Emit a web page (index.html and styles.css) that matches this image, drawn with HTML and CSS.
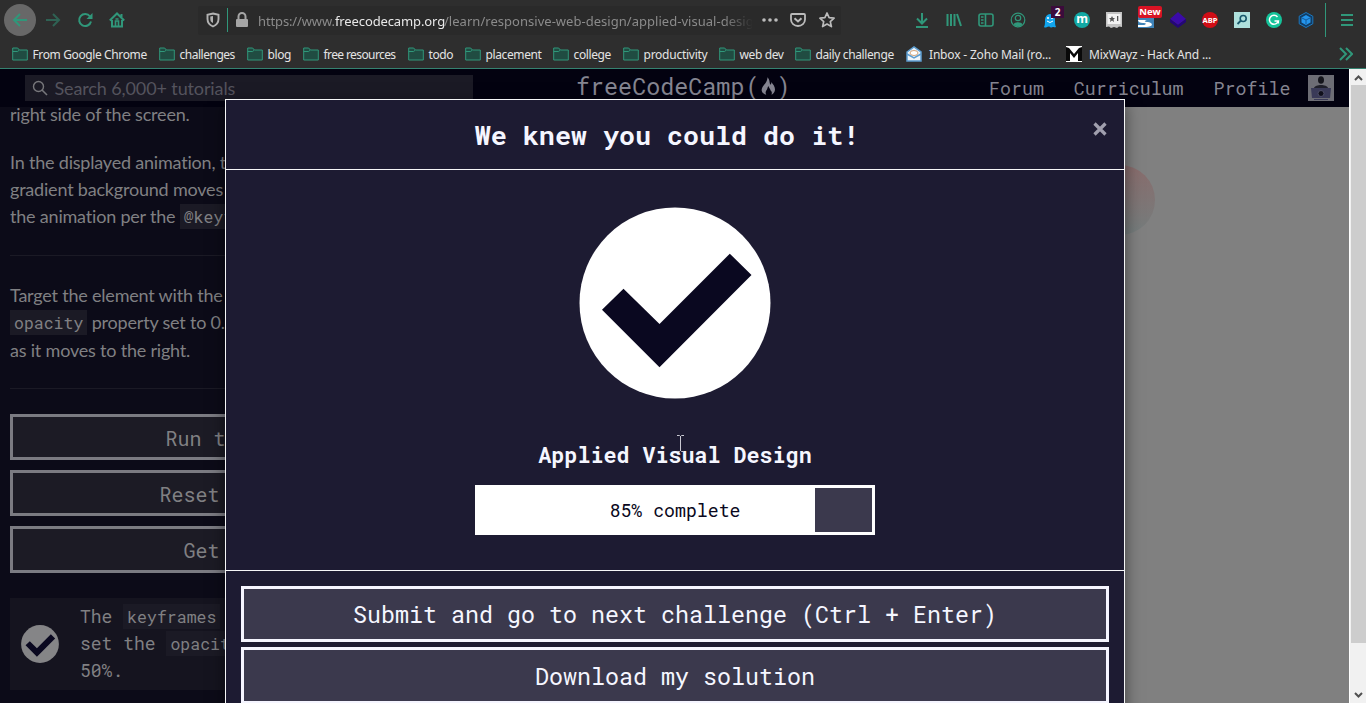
FILE: index.html
```
<!DOCTYPE html>
<html lang="en">
<head>
<meta charset="utf-8">
<title>freeCodeCamp</title>
<link rel="stylesheet" href="styles.css">
</head>
<body>
<svg width="0" height="0" class="defs">
  <symbol id="folder" viewBox="0 0 16 14"><path d="M.7 13V1h5l1.600 2h8v10z" fill="#204c42" stroke="#30977a"/><path d="M.7 4.500h5L7.300 3" fill="none" stroke="#30977a"/></symbol>
  <symbol id="check" viewBox="0 0 192 192"><circle cx="96" cy="96" r="95.5" fill="currentColor"/><path d="M23 102.700l21.500-21 36 35.300 70.300-70.300 21.700 21.300-92 92.300z" fill="#0a0820"/></symbol>
</svg>
<header class="chrome">
  <div class="toolbar">
    <div class="nav">
      <span class="slot back"><svg width="16" height="16" viewBox="0 0 16 16"><path d="M15 8H2M8 2L2 8l6 6" class="t2"/></svg></span>
      <span class="slot dim"><svg width="16" height="16" viewBox="0 0 16 16"><path d="M1 8h13M8 2l6 6-6 6" class="t2"/></svg></span>
      <span class="slot"><svg width="16" height="16" viewBox="0 0 16 16"><path d="M13 4.500A6 6 0 1 0 14 9.500" class="t2"/><path d="M15.500 1v6h-6z" fill="#30977a"/></svg></span>
      <span class="slot"><svg width="16" height="16" viewBox="0 0 16 16"><path d="M.8 8.500L8 1.500l7.200 7M3 8v6.500h10V8M12.500 5V2" class="t2"/><path d="M6.500 14V9h3v5M6.500 7h3" class="t15"/></svg></span>
    </div>
    <div class="urlbar">
      <svg class="shield" width="14" height="16" viewBox="0 0 14 16"><path d="M7 1.500l5.500 1.300V7c0 4-2 6-5.500 7.500C3.500 13 1.500 11 1.500 7V2.800z" fill="none" stroke="#b2b2b2" stroke-width="1.900"/><path d="M7 4v7C5 10 4.300 9 4.300 7V4.500z" fill="#b2b2b2"/></svg>
      <i class="rule"></i>
      <svg class="lock" width="14" height="16" viewBox="0 0 14 16"><path d="M3.500 7V4.500a3.500 3.500 0 0 1 7 0V7" fill="none" stroke="#a5a5a5" stroke-width="2"/><rect x="1" y="7" width="12" height="8" rx="1" fill="#a5a5a5"/></svg>
      <div class="url"><span class="u1">https://www.</span><b class="u2">freecodecamp.org</b><span class="u3">/learn/responsive-web-design/applied-visual-desig</span></div>
      <div class="url-actions">
        <svg width="16" height="16" viewBox="0 0 16 16" fill="#bbb"><circle cx="2" cy="8" r="1.800"/><circle cx="8" cy="8" r="1.800"/><circle cx="14" cy="8" r="1.800"/></svg>
        <svg width="16" height="16" viewBox="0 0 16 16" fill="none" stroke="#bbb" stroke-width="1.800"><path d="M2 2h12a1 1 0 0 1 1 1v4.500a7 6.500 0 0 1-14 0V3a1 1 0 0 1 1-1z"/><path d="M4.500 6.200L8 9.500l3.500-3.300" stroke-width="2"/></svg>
        <svg width="16" height="16" viewBox="0 0 16 16" fill="none" stroke="#bbb" stroke-width="1.700" stroke-linejoin="round"><path d="M8 1l2.100 4.700 5 .5-3.800 3.400 1.100 5L8 12l-4.400 2.600 1.100-5L.9 6.200l5-.5z"/></svg>
      </div>
    </div>
    <div class="tools">
      <span class="slot"><svg width="16" height="16" viewBox="0 0 16 16"><path d="M8 1v10M3 6.500l5 5 5-5M2 15h12" class="t2"/></svg></span>
      <span class="slot"><svg width="16" height="16" viewBox="0 0 16 16"><path d="M1.500 2v12M5 2v12M8.500 2v12M11 2l4 12" class="t2"/></svg></span>
      <span class="slot"><svg width="16" height="16" viewBox="0 0 16 16"><rect x="1" y="2" width="14" height="12" rx="2" class="t15"/><path d="M7.500 2v12M3 5h2.500M3 8h2.500M3 11h2.500" class="t15"/></svg></span>
      <span class="slot"><svg width="16" height="16" viewBox="0 0 16 16"><circle cx="8" cy="8" r="6.800" class="t1"/><circle cx="8" cy="6" r="2.700" class="t1"/><path d="M3.500 12.500c1-3 8-3 9 0-3 2.500-6 2.500-9 0z" fill="#30977a"/></svg></span>
      <span class="slot"><svg width="16" height="16" viewBox="0 0 16 16"><path d="M2 15c1-2 1-4 1-7a5 6 0 0 1 10 0c0 3 0 5 1 7-1.500 1-2-.5-3 0s-2 .8-3 0-2-.5-3 0-2 1-3 0z" fill="#11a5ee"/><circle cx="6" cy="6" r="1" fill="#fff"/><circle cx="10" cy="6" r="1" fill="#fff"/><path d="M5 9q3 3 6 0" fill="none" stroke="#fff"/></svg><em class="count">2</em></span>
      <span class="slot"><span class="disc m">m</span></span>
      <span class="slot"><svg width="16" height="16" viewBox="0 0 16 16"><path d="M0 0h16v15l-3-.5-2 1.500-3-1-3 1-2-1.500-3 .5z" fill="#c4c4c4"/><path d="M1.500 2h13v10h-13z" fill="#f2f2f2"/><path d="M6 4l1 2h2L7.500 7.500 8 10 6 8.500 4 10l.5-2.500L3 6h2zM11 4h1.300v5H11z" fill="#555"/></svg></span>
      <span class="slot"><svg width="16" height="16" viewBox="0 0 16 16"><rect y="2" width="16" height="14" fill="#3e83b8"/><path d="M0 8h9c-3 1-3 2 1 2 6 1 5 5-2 5H0v-2h6c3-1 2-2-1-2-3 0-5-1-5-3z" fill="#fff"/></svg><em class="new">New</em></span>
      <span class="slot"><svg width="16" height="16" viewBox="0 0 16 16"><path d="M8 0l8 7-8 6-8-6z" fill="#3b0ba8"/><path d="M0 7l8 6 8-6v3l-8 6-8-6z" fill="#240679"/></svg></span>
      <span class="slot"><span class="disc abp">ABP</span></span>
      <span class="slot"><svg width="16" height="16" viewBox="0 0 16 16"><path d="M0 0h16v16H0z" fill="#aee0dc"/><circle cx="9.200" cy="6.500" r="3" fill="none" stroke="#17576b" stroke-width="1.600"/><path d="M7 8.500L3.500 12" stroke="#17576b" stroke-width="1.800"/></svg></span>
      <span class="slot"><svg width="16" height="16" viewBox="0 0 16 16"><circle cx="8" cy="8" r="8" fill="#15c39a"/><path d="M11.500 5A4.500 4.500 0 1 0 12.300 9H8.500M12.300 9v2.500" fill="none" stroke="#fff" stroke-width="1.500"/></svg></span>
      <span class="slot"><svg width="16" height="16" viewBox="0 0 16 16"><path d="M8 .5l6.800 3.700v7.600L8 15.500l-6.800-3.700V4.200z" fill="#123c63" stroke="#1b78c0"/><path d="M8 3l4.500 2.500v5L8 13l-4.500-2.500v-5z" fill="#2495ec"/><path d="M4 6l4 2 4-2M8 8v4" fill="none" stroke="#155b9c"/></svg></span>
    </div>
    <div class="menu"><svg width="14" height="14" viewBox="0 0 14 14"><path d="M1 2h12M1 7h12M1 12h12" class="t2"/></svg></div>
  </div>
  <nav class="bookmarks">
    <a class="bm b1"><svg><use href="#folder"/></svg>From Google Chrome</a>
    <a class="bm b2"><svg><use href="#folder"/></svg>challenges</a>
    <a class="bm b3"><svg><use href="#folder"/></svg>blog</a>
    <a class="bm b4"><svg><use href="#folder"/></svg>free resources</a>
    <a class="bm b5"><svg><use href="#folder"/></svg>todo</a>
    <a class="bm b6"><svg><use href="#folder"/></svg>placement</a>
    <a class="bm b7"><svg><use href="#folder"/></svg>college</a>
    <a class="bm b8"><svg><use href="#folder"/></svg>productivity</a>
    <a class="bm b9"><svg><use href="#folder"/></svg>web dev</a>
    <a class="bm b10"><svg><use href="#folder"/></svg>daily challenge</a>
    <a class="bm site b11"><svg viewBox="0 0 16 16"><path d="M1 6l7-5 7 5v9H1z" fill="#eef4fa" stroke="#5c9ccf" stroke-width="1.500"/><ellipse cx="8" cy="7" rx="4" ry="2.500" fill="#fff" stroke="#d2a278"/><path d="M1 8l7 4 7-4" fill="none" stroke="#5c9ccf" stroke-width="1.500"/></svg>Inbox - Zoho Mail (ro...</a>
    <a class="bm site b12"><svg viewBox="0 0 16 16"><path d="M0 0h16v16H0z" fill="#fff"/><path d="M0 1l3 1 5 6 5-6 3-1v14h-4V7l-4 5-4-5v8H0z" fill="#090909"/></svg>MixWayz - Hack And ...</a>
    <svg class="more" width="14" height="14" viewBox="0 0 14 14"><path d="M1 1l6 6-6 6M7 1l6 6-6 6" class="t2"/></svg>
  </nav>
</header>
<div class="view">
  <div class="page">
    <div class="site-nav">
      <div class="search"><svg width="16" height="16" viewBox="0 0 16 16"><circle cx="6.500" cy="6.500" r="5" fill="none" stroke="#77777b" stroke-width="1.400"/><path d="M10 10l5 5" stroke="#77777b" stroke-width="1.600"/></svg>Search 6,000+ tutorials</div>
      <div class="brand"><span>freeCodeCamp</span><span class="paren">(</span><svg width="14" height="18" viewBox="0 0 16 20"><path d="M7.500 0c3 4 2 6 3 8 1 1 1.500-1 1-2.500C14 8 16 11 16 14c0 3-2 5-4 6 1-3 0-4-1-5-.5-2-2-3-2.500-5C7 12 7.500 14 6 15c-1 2-1 3 0 5-4-1-6-4-5-7 1-4 6-6 6.500-13z" fill="#858591"/></svg><span class="paren">)</span></div>
      <div class="links"><a>Forum</a><a>Curriculum</a><a>Profile</a>
        <svg class="avatar" width="26" height="26" viewBox="0 0 26 26"><path d="M0 0h26v26H0z" fill="#6d6d75"/><ellipse cx="13" cy="5" rx="3" ry="3.800" fill="#15151c"/><path d="M6 13c1-4 13-4 14 0z" fill="#20202b"/><path d="M3 13h20l-1 10H4zM6 24h14v1H6z" fill="#3a3a58"/><circle cx="13" cy="18.500" r="3" fill="#10101c" stroke="#505068"/></svg>
      </div>
    </div>
    <div class="panes">
      <main class="lesson">
        <p class="p1">right side of the screen.</p>
        <p class="p2">In the displayed animation, the<br>gradient background moves<br>the animation per the <code>@keyframes</code></p>
        <hr>
        <p class="p3">Target the element with the<br><code>opacity</code> property set to 0.1<br>as it moves to the right.</p>
        <hr class="h2">
        <div class="actions">
          <button>Run the Tests</button>
          <button>Reset All Code</button>
          <button>Get a hint</button>
        </div>
        <div class="test"><svg width="38" height="38"><use href="#check"/></svg><p>The <code>keyframes</code><br>set the <code>opacity</code><br>50%.</p></div>
      </main>
      <section class="preview"><div class="ball"></div></section>
    </div>
    <div class="modal">
      <div class="modal-head"><h1>We knew you could do it!</h1><svg class="close" width="14" height="14" viewBox="0 0 14 14"><path d="M1.500 1.500l11 11M12.500 1.500l-11 11" stroke="#a09fae" stroke-width="3.200"/></svg></div>
      <div class="modal-body">
        <svg class="big-check" width="192" height="192"><use href="#check"/></svg>
        <h2>Applied Visual Design</h2>
        <div class="progress"><div class="fill"></div><span>85% complete</span></div>
        <svg class="cursor" width="9" height="17" viewBox="0 0 9 17"><path d="M1 .5h2.500l1 1 1-1H8M4.500 1v15M1 16.500h2.500l1-1 1 1H8" fill="none" stroke="#c9c9d2"/></svg>
      </div>
      <div class="modal-foot"><button>Submit and go to next challenge (Ctrl + Enter)</button><button>Download my solution</button></div>
    </div>
  </div>
  <div class="scrollbar">
    <svg width="9" height="6" viewBox="0 0 9 6"><path d="M1 5l3.500-3.500L8 5" fill="none" stroke="#505050" stroke-width="2"/></svg>
    <div class="thumb"></div>
    <svg width="9" height="6" viewBox="0 0 9 6"><path d="M1 1l3.500 3.500L8 1" fill="none" stroke="#505050" stroke-width="2"/></svg>
  </div>
</div>
</body>
</html>
```
FILE: styles.css
```
* { box-sizing: border-box; }
body { margin: 0; height: 703px; overflow: hidden; font-family: Lato, sans-serif; background: #808080; }
svg { display: block; flex: none; }
p, h1, h2 { margin: 0; }
.defs { position: absolute; }
.t1, .t15, .t2 { fill: none; stroke: #30977a; stroke-width: 1.2; }
.t15 { stroke-width: 1.6; }
.t2 { stroke-width: 2; }

.chrome { height: 69px; background: #2e2e2e; border-bottom: 1px solid #358270; font-family: "Noto Sans", sans-serif; }
.toolbar { height: 40px; display: flex; align-items: center; }
.slot { width: 32px; height: 32px; display: flex; align-items: center; justify-content: center; position: relative; flex: none; }
.nav { display: flex; width: 198px; padding-left: 4px; }
.back { background: #686868; border-radius: 50%; margin-right: 1px; }
.dim { opacity: .5; }
.urlbar { width: 643px; height: 29px; background: #2a2a2a; display: flex; align-items: center; border-radius: 2px; }
.shield { margin-left: 8px; }
.rule { width: 1px; height: 24px; background: #30977a; margin: 0 7px 0 7px; }
.url { margin-left: 9px; width: 495px; white-space: nowrap; display: flex; font-size: 13px; color: #8b8b8b; line-height: 20px; padding-top: 1px; -webkit-mask-image: linear-gradient(90deg, #000 94%, transparent); }
.u1 { width: 77px; flex: none; letter-spacing: -.13px; }
.u2 { width: 109px; flex: none; color: #e8e8e8; font-weight: 400; letter-spacing: -.12px; }
.u3 { letter-spacing: .03px; }
.url-actions { display: flex; gap: 12.5px; margin-left: 8.5px; }
.tools { display: flex; margin-left: 65px; }
.count { position: absolute; left: 17px; top: 2px; width: 13px; height: 12px; background: #3c0b3c; color: #fff; font: bold 10px/12px "Noto Sans"; text-align: center; }
.new { position: absolute; left: 8px; top: 2px; width: 24px; height: 12px; border-radius: 2px; background: #d81324; color: #fff; font: bold 9.5px/12px "Noto Sans"; text-align: center; }
.disc { width: 16px; height: 16px; border-radius: 50%; color: #fff; text-align: center; }
.m { background: #12a9a4; font: bold 12px/14px "Noto Sans"; }
.abp { background: #d00d16; font: bold 7.5px/16px "Noto Sans"; }
.menu { margin-left: 3px; border-left: 1px solid #30977a; height: 34px; padding-left: 14px; display: flex; align-items: center; }
.bookmarks { height: 28px; padding-left: 12px; display: flex; align-items: center; font-size: 12px; letter-spacing: -.38px; color: #e4e4e4; }
.bm { display: flex; align-items: center; gap: 4.5px; white-space: nowrap; flex: none; height: 28px; }
.bm svg { width: 16px; height: 14px; }
.site { gap: 7px; letter-spacing: -.18px; }
.site svg { height: 16px; }
.b1 { width: 147px; } .b2 { width: 88px; letter-spacing: -.48px; } .b3 { width: 56px; } .b4 { width: 105px; letter-spacing: -.6px; }
.b5 { width: 57px; } .b6 { width: 88px; } .b7 { width: 70px; } .b8 { width: 96px; letter-spacing: -.25px; }
.b9 { width: 76px; } .b10 { width: 111px; } .b11 { width: 160px; } .b12 { width: 273px; }

.view { height: 634px; display: flex; }
.page { width: 1349px; position: relative; overflow: hidden; }
.site-nav { height: 38px; background: #030210; display: flex; position: relative; }
.search { width: 448px; height: 26px; margin: 6px 0 0 25px; background: #1b1a25; color: #54535d; font-size: 18px; letter-spacing: -.12px; line-height: 26px; display: flex; align-items: center; gap: 6.500px; padding-left: 7px; }
.brand { margin: 4px 0 0 103px; width: 216px; height: 26px; color: #858591; font: 23.4px/26px "Roboto Mono", "Liberation Mono", monospace; display: flex; align-items: center; }
.paren { width: 16px; display: flex; justify-content: center; }
.brand svg { margin-left: 1px; }
.paren:last-child { margin-left: 0; }
.links { margin-left: 197px; display: flex; gap: 30px; color: #858591; font: 18.300px/38px "Roboto Mono", "Liberation Mono", monospace; }
.avatar { margin: 6px 0 0 -12px; }
.panes { display: flex; height: 596px; }
.lesson { width: 490px; padding: 0 10px; background: #0c0b18; color: #808083; font-size: 18px; letter-spacing: -.2px; line-height: 27px; white-space: nowrap; flex: none; }
.p1 { margin-top: -6px; }
.p2, .p3 { margin-top: 21px; }
.lesson code { font: 16.500px/24px "Roboto Mono", "Liberation Mono", monospace; letter-spacing: 0; background: #1b1a25; padding: 2px 4px; }
.lesson hr { border: 0; border-top: 1px solid #1b1a25; margin: 25px 0 26px; }
.lesson .h2 { margin: 24px 0 25px; }
.lesson .p3 { margin-top: 0; line-height: 27.3px; }
.actions { display: grid; gap: 10px; }
button { display: block; text-align: center; border-radius: 0; }
.actions button { height: 46.3px; border: 3px solid #7b7b82; background: #1c1b25; color: #808083; font: 20px/36px "Roboto Mono", "Liberation Mono", monospace; padding: 1px 3px 0 0; }
.test { height: 92px; margin-top: 25px; background: #15141f; display: flex; align-items: center; padding-left: 11px; color: #858587; gap: 21px; }
.test p { font: 18px/27.4px "Roboto Mono", "Liberation Mono", monospace; letter-spacing: 0; color: #808083; }
.preview { flex: 1; background: #808080; position: relative; }
.ball { width: 70px; height: 70px; border-radius: 50%; margin: 58px 0 0 595px; background: linear-gradient(#8b6868, #727c7c); opacity: .8; }

.modal { position: absolute; left: 225px; top: 30px; width: 900px; height: 640px; background: #1d1b32; border: 1px solid #f5f6f7; box-shadow: 0 5px 15px rgba(0,0,0,.5); color: #f5f6ff; font-family: "Roboto Mono", "Liberation Mono", monospace; }
.modal-head { height: 70px; border-bottom: 1px solid #f5f6f7; display: flex; position: relative; }
.modal-head h1 { width: 882px; text-align: center; font-size: 26.7px; line-height: 69px; }
.close { position: absolute; right: 17px; top: 22px; }
.modal-body { height: 401px; border-bottom: 1px solid #f5f6f7; position: relative; display: flex; flex-direction: column; align-items: center; }
.big-check { margin-top: 37px; color: #fff; }
h2 { font-size: 21.700px; line-height: 30px; margin-top: 41px; }
.progress { width: 400px; height: 50px; margin-top: 15px; border: 3px solid #fff; background: #3b394d; position: relative; }
.fill { width: 85.6%; height: 100%; background: #fff; }
.progress span { position: absolute; left: 0; right: 0; top: 0; text-align: center; font-size: 18.200px; line-height: 45px; color: #0a0820; }
.cursor { position: absolute; left: 450px; top: 265px; }
.modal-foot { padding: 15px; display: grid; gap: 5px; }
.modal-foot button { height: 56px; border: 3px solid #f5f5ff; background: #3b394d; color: #f5f6ff; font: 23.330px/48px "Roboto Mono", "Liberation Mono", monospace; padding: 0 0 1px; }
.modal-foot button + button { height: 57px; padding: 1px 0 0; }

.scrollbar { width: 17px; background: #f1f1f1; display: flex; flex-direction: column; align-items: center; padding: 6px 0 2px; border-left: 1px solid #fff; }
.thumb { width: 15px; height: 558px; background: #cdcdcd; margin: 4px 0 49px; }
```
